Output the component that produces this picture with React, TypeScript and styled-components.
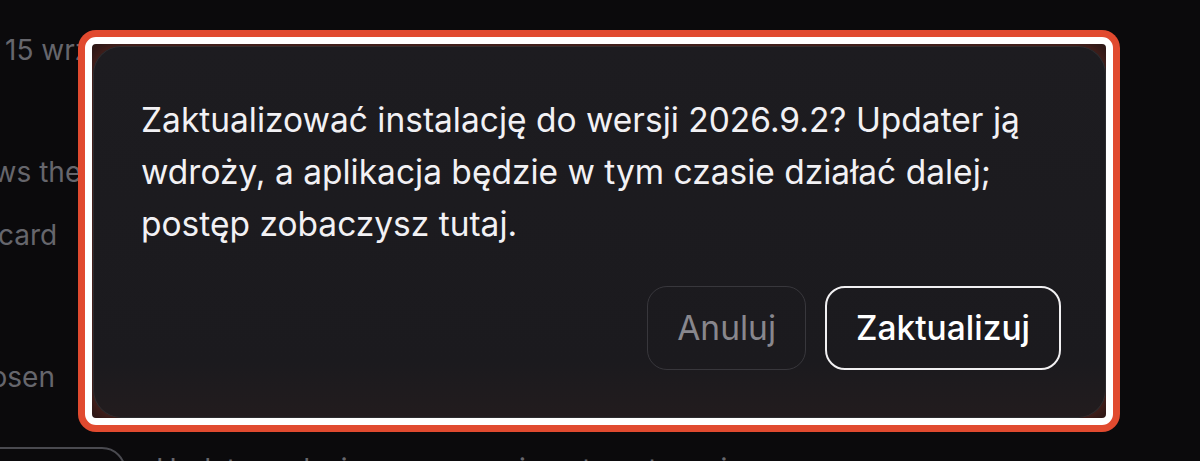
import React from 'react';
import styled, { createGlobalStyle } from 'styled-components';

const GlobalStyle = createGlobalStyle`
  html, body {
    margin: 0;
    padding: 0;
    background: #0b0a0c;
  }

  body {
    font-family: Inter, "Noto Sans", "Liberation Sans", sans-serif;
    -webkit-font-smoothing: antialiased;
  }

  * {
    box-sizing: border-box;
  }
`;

const Page = styled.div`
  position: relative;
  width: 1200px;
  height: 461px;
  overflow: hidden;
  background: #0b0a0c;
`;

const Backdrop = styled.div`
  display: flex;
  flex-direction: column;
  padding-top: 30px;
  color: #66666c;
  font-size: 28px;
  line-height: 40px;
`;

const BgLine = styled.div<{ $gap?: number; $shift?: number }>`
  margin-top: ${({ $gap }) => $gap ?? 0}px;
  margin-left: ${({ $shift }) => $shift ?? 0}px;
  white-space: nowrap;
`;

const BgRow = styled.div`
  display: flex;
  align-items: flex-start;
  gap: 30px;
  margin-top: 50px;
  margin-left: -40px;
`;

const BgPill = styled.div`
  width: 166px;
  height: 48px;
  border: 2px solid #4a4a50;
  border-radius: 24px;
`;

const BgText = styled.span`
  margin-top: 2px;
  white-space: nowrap;
`;

const Highlight = styled.div`
  position: absolute;
  left: 85px;
  top: 37px;
  width: 1028px;
  height: 388px;
  border: 7px solid #ffffff;
  border-radius: 11px;
  box-shadow: 0 0 0 7px #e14a2f;
  background: #2a1716;
  overflow: hidden;
  display: flex;
`;

const Dialog = styled.div`
  flex: 1;
  margin: 2px 0 0 1px;
  display: flex;
  flex-direction: column;
  padding: 47px 44px 47px 47px;
  background: linear-gradient(180deg, #1d1c20 0%, #1b1a1e 85%, #221c1e 100%);
  border: 1px solid rgba(255, 255, 255, 0.07);
  border-radius: 28px;
  box-shadow: 0 0 18px rgba(190, 70, 50, 0.35);
`;

const Message = styled.p`
  margin: 0;
  color: #f2f1f4;
  font-size: 33.5px;
  line-height: 52px;
  font-weight: 400;
`;

const Actions = styled.div`
  display: flex;
  justify-content: flex-end;
  gap: 19px;
  margin-top: auto;
`;

const Button = styled.button<{ $primary?: boolean }>`
  height: 84px;
  padding: 0 29px;
  border-radius: 20px;
  background: transparent;
  font-family: inherit;
  font-size: 33.5px;
  font-weight: ${({ $primary }) => ($primary ? 500 : 400)};
  color: ${({ $primary }) => ($primary ? '#ffffff' : '#88878d')};
  border: ${({ $primary }) => ($primary ? '2px solid #f1f0f2' : '1.5px solid #38373c')};
  cursor: pointer;
`;

export default function App() {
  return (
    <Page>
      <GlobalStyle />
      <Backdrop>
        <BgLine $shift={5}>15 wrz 2026, 09:41</BgLine>
        <BgLine $gap={82} $shift={-54}>shows the latest</BgLine>
        <BgLine $gap={23} $shift={-2}>card{'\u2003'}details</BgLine>
        <BgLine $gap={102} $shift={-42}>chosen{'\u2003'}channel</BgLine>
        <BgRow>
          <BgPill />
          <BgText>Updater wdroży nową wersję automatycznie</BgText>
        </BgRow>
      </Backdrop>

      <Highlight>
        <Dialog role="dialog" aria-modal="true">
          <Message>
            Zaktualizować instalację do wersji 2026.9.2? Updater ją wdroży, a aplikacja będzie w tym czasie działać dalej; postęp zobaczysz tutaj.
          </Message>
          <Actions>
            <Button type="button">Anuluj</Button>
            <Button type="button" $primary>
              Zaktualizuj
            </Button>
          </Actions>
        </Dialog>
      </Highlight>
    </Page>
  );
}
